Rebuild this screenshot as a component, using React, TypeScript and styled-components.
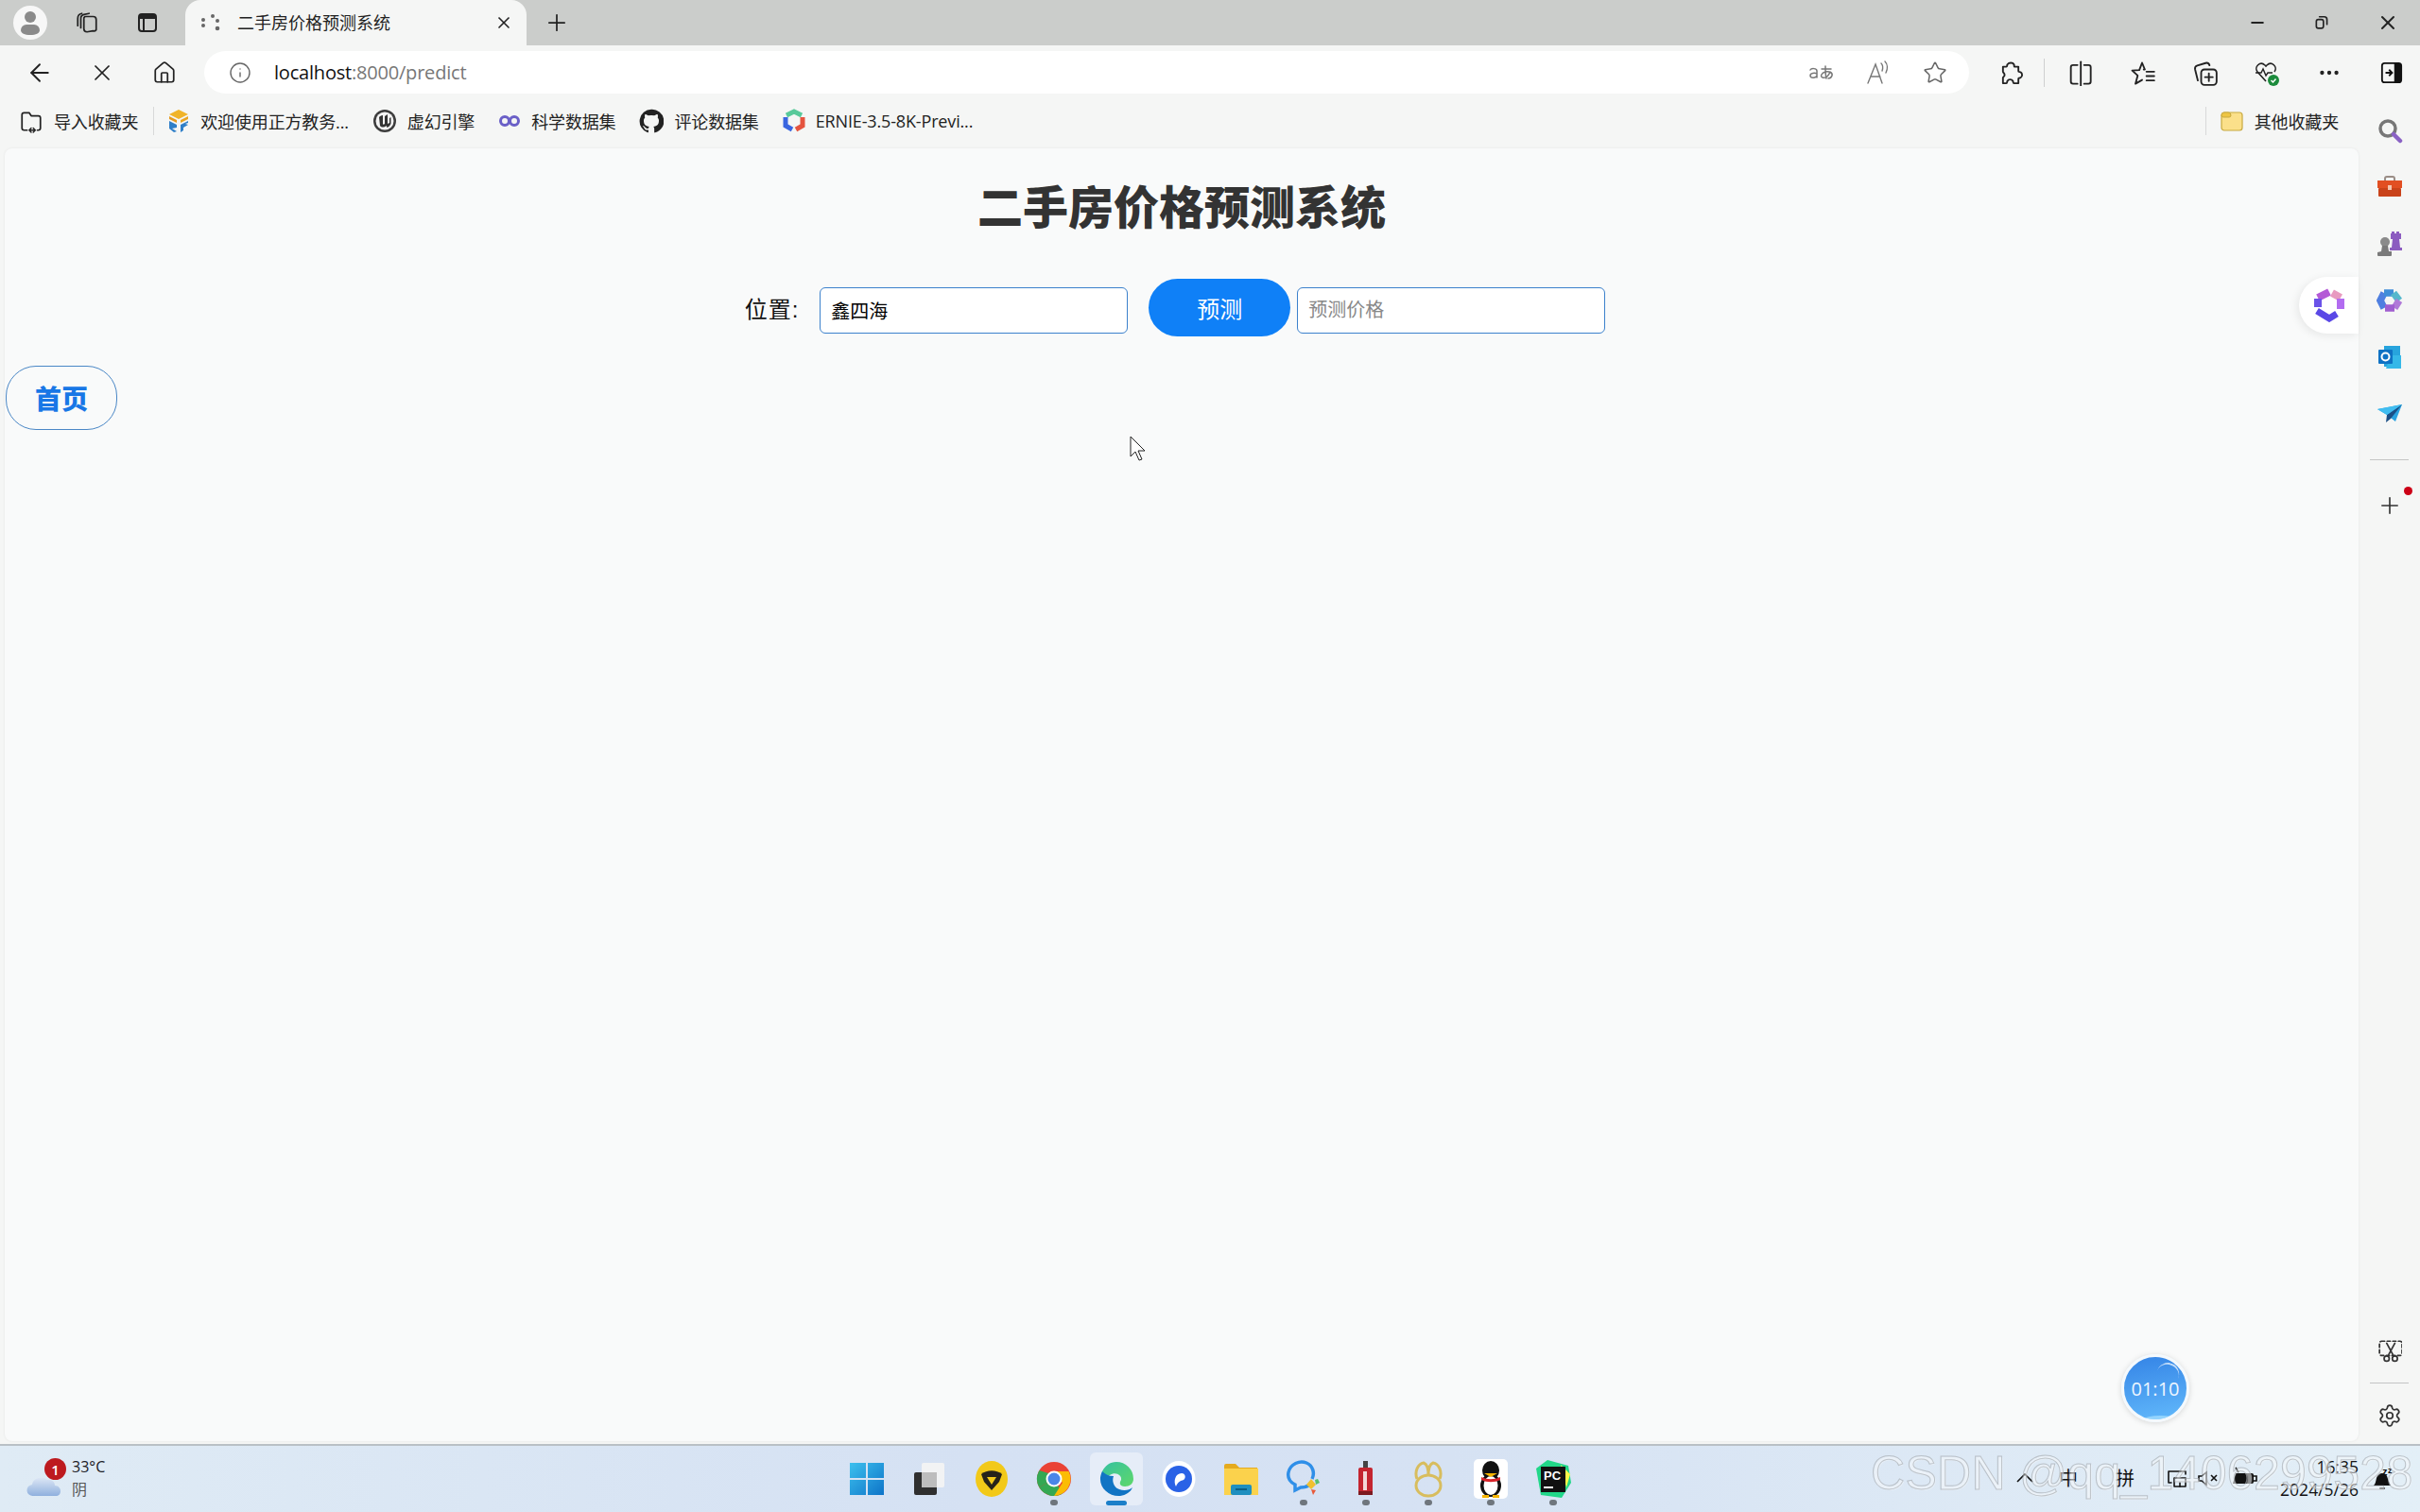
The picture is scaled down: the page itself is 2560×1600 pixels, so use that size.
import { FC, ReactNode } from 'react';
import styled, { createGlobalStyle } from 'styled-components';
import { ArrowLeft, Home, Info, Minus, MoreHorizontal, Plus, Settings, Star, X } from 'lucide-react';

const UI_FONT = '"Open Sans", "Noto Sans CJK SC", sans-serif';
const CJK_FONT = '"Liberation Sans", "Noto Sans CJK SC", sans-serif';

const GlobalStyle = createGlobalStyle`
  html, body {
    margin: 0;
    padding: 0;
    background: #f5f6f5;
    font-family: ${UI_FONT};
  }
  * {
    box-sizing: border-box;
  }
`;

const Screen = styled.div`
  position: relative;
  display: flex;
  flex-direction: column;
  width: 2560px;
  height: 1600px;
  overflow: hidden;
  background: #f5f6f5;
`;

/* ---- window chrome ---- */

const TitleBar = styled.div`
  display: flex;
  align-items: center;
  flex: 0 0 48px;
  padding-left: 14px;
  background: #cbcdcb;
`;

const Avatar = styled.div`
  display: flex;
  align-items: center;
  justify-content: center;
  width: 36px;
  height: 36px;
  margin-right: 10px;
  border-radius: 50%;
  background: #f7f7f7;
`;

const Slot = styled.div<{ $w?: number }>`
  display: flex;
  align-items: center;
  justify-content: center;
  flex: 0 0 ${(p) => p.$w ?? 66}px;
  height: 100%;
  color: #222;
`;

const Tab = styled.div`
  display: flex;
  align-items: center;
  flex: 0 0 361px;
  height: 48px;
  margin-left: 8px;
  padding: 0 14px 0 14px;
  border-radius: 16px 16px 0 0;
  background: #f5f6f5;
`;

const TabTitle = styled.span`
  flex: 1;
  margin: 0 0 2px 17px;
  font-family: ${CJK_FONT};
  font-size: 18px;
  color: #222;
`;

const Spacer = styled.div`
  flex: 1;
`;

const Toolbar = styled.div`
  display: flex;
  align-items: center;
  flex: 0 0 51px;
  padding: 6px 0 0 9px;
  background: #f5f6f5;
`;

const AddressBar = styled.div`
  display: flex;
  align-items: center;
  flex: 0 0 1867px;
  height: 45px;
  margin: 0 11px 0 9px;
  padding: 0 6px 0 26px;
  border-radius: 23px;
  background: #fff;
`;

const AddressText = styled.div`
  flex: 1;
  margin-left: 24px;
  font-size: 20px;
  letter-spacing: -0.2px;
  color: #777;
  b {
    font-weight: 400;
    color: #111;
  }
`;

const ToolDivider = styled.div`
  flex: 0 0 1px;
  height: 30px;
  margin: 0 4px 0 2px;
  background: #cfd0d0;
`;

/* ---- page below the toolbar ---- */

const Body = styled.div`
  display: flex;
  flex: 1;
  min-height: 0;
`;

const MainColumn = styled.div`
  display: flex;
  flex-direction: column;
  flex: 0 0 2495px;
`;

const BookmarkBar = styled.div`
  display: flex;
  align-items: center;
  flex: 0 0 58px;
  padding: 0 21px 0 20px;
`;

const Bookmark = styled.div<{ $last?: boolean }>`
  display: flex;
  align-items: center;
  gap: 11px;
  margin-right: ${(p) => (p.$last ? 0 : 25)}px;
  font-family: ${UI_FONT};
  font-size: 18px;
  letter-spacing: -0.15px;
  color: #222;
  white-space: nowrap;
`;

const BookmarkDivider = styled.div`
  flex: 0 0 1px;
  height: 30px;
  margin: 0 14px 0 -9px;
  background: #d8d9d9;
`;

const Content = styled.div`
  flex: 1;
  margin: 0 0 3px 5px;
  border-radius: 8px;
  background: #f9fafa;
  box-shadow: 0 0 3px rgba(0, 0, 0, 0.07);
`;

const PageHeading = styled.h1`
  margin: 0;
  padding-top: 29px;
  font-family: ${CJK_FONT};
  font-size: 48px;
  font-weight: 900;
  line-height: 70px;
  text-align: center;
  color: #333;
`;

const PredictForm = styled.form`
  display: flex;
  align-items: center;
  justify-content: center;
  margin-top: 39px;
  padding-right: 14px;
`;

const FieldLabel = styled.label`
  margin-right: 22px;
  font-family: ${CJK_FONT};
  font-size: 24px;
  letter-spacing: 1px;
  color: #111;
`;

const TextField = styled.input`
  width: 326px;
  height: 49px;
  margin-top: 5px;
  padding: 0 11px;
  border: 1px solid #3c81cc;
  border-radius: 6px;
  outline: none;
  background: #fff;
  font-family: ${CJK_FONT};
  font-size: 20px;
  color: #000;
  &::placeholder {
    color: #888;
  }
`;

const PredictButton = styled.button`
  width: 150px;
  height: 61px;
  margin: 0 7px 0 22px;
  border: none;
  border-radius: 31px;
  background: #0f80f7;
  font-family: ${CJK_FONT};
  font-size: 24px;
  color: #fff;
`;

const HomeLink = styled.a`
  display: flex;
  align-items: center;
  justify-content: center;
  width: 118px;
  height: 68px;
  margin: 31px 0 0 1px;
  border: 1.5px solid #4a87c6;
  border-radius: 32px;
  font-family: ${CJK_FONT};
  font-size: 28px;
  font-weight: 900;
  color: #1877e6;
`;

const SideRail = styled.div`
  display: flex;
  flex-direction: column;
  align-items: center;
  flex: 1;
  padding-top: 9px;
`;

const RailSlot = styled.div`
  position: relative;
  display: flex;
  align-items: center;
  justify-content: center;
  flex: 0 0 60px;
  width: 100%;
  color: #333;
`;

const RailDivider = styled.div<{ $my?: number }>`
  flex: 0 0 1px;
  width: 41px;
  margin: ${(p) => p.$my ?? 0}px 0;
  background: #c4c5c5;
`;

const NotifyDot = styled.span`
  position: absolute;
  top: 10px;
  right: 8px;
  width: 9px;
  height: 9px;
  border-radius: 50%;
  background: #cc0016;
`;

/* ---- things lying over the page ---- */

const FloatingPill = styled.div`
  position: absolute;
  top: 293px;
  left: 2432px;
  display: flex;
  align-items: center;
  justify-content: center;
  width: 63px;
  height: 60px;
  border-radius: 30px 0 0 30px;
  background: #fff;
  box-shadow: -2px 2px 10px rgba(0, 0, 0, 0.08);
`;

const TimerBubble = styled.div`
  position: absolute;
  top: 1433px;
  left: 2244px;
  display: flex;
  align-items: center;
  justify-content: center;
  width: 72px;
  height: 72px;
  border: 3px solid #f4f9fd;
  border-radius: 50%;
  overflow: hidden;
  background: linear-gradient(170deg, #3484e6, #62b9fb);
  box-shadow: 0 1px 6px rgba(0, 0, 0, 0.15);
  font-family: 'Open Sans', sans-serif;
  font-size: 20px;
  color: #eef6ff;
  &::before {
    content: '';
    position: absolute;
    top: 6px;
    right: 8px;
    width: 24px;
    height: 24px;
    border-top: 2px solid rgba(255, 255, 255, 0.7);
    border-radius: 50%;
    transform: rotate(20deg);
  }
  &::after {
    content: '';
    position: absolute;
    bottom: -30px;
    left: 6px;
    width: 64px;
    height: 34px;
    border-radius: 50%;
    background: rgba(170, 225, 255, 0.7);
  }
`;

const Pointer = styled.svg`
  position: absolute;
  top: 461px;
  left: 1195px;
`;

const Watermark = styled.div`
  position: absolute;
  top: 1530px;
  left: 1979px;
  font-family: 'Liberation Sans', sans-serif;
  font-size: 50px;
  line-height: 58px;
  letter-spacing: 0.3px;
  white-space: nowrap;
  color: rgba(238, 243, 247, 0.25);
  -webkit-text-stroke: 1px rgba(160, 165, 170, 0.6);
  text-shadow: 1px 1px 1px rgba(255, 255, 255, 0.4);
`;

/* ---- taskbar ---- */

const Taskbar = styled.div`
  display: grid;
  grid-template-columns: 1fr auto 1fr;
  align-items: center;
  flex: 0 0 72px;
  border-top: 2px solid #b9c0c5;
  background: linear-gradient(90deg, #dfebf5 0%, #d5e1f3 40%, #d6e2f3 60%, #e3eff7 100%);
`;

const Weather = styled.div`
  display: flex;
  align-items: center;
  padding-left: 28px;
`;

const CloudBox = styled.div`
  position: relative;
  display: flex;
  align-items: flex-end;
  width: 38px;
  height: 40px;
`;

const WeatherBadge = styled.span`
  position: absolute;
  top: -2px;
  left: 19px;
  display: flex;
  align-items: center;
  justify-content: center;
  width: 23px;
  height: 23px;
  border-radius: 50%;
  background: #bd1a1f;
  font-family: 'Open Sans', sans-serif;
  font-size: 15px;
  font-weight: 600;
  color: #fff;
`;

const WeatherText = styled.div`
  margin: -2px 0 0 10px;
  font-family: ${UI_FONT};
  font-size: 16px;
  line-height: 24px;
  color: #1c2026;
  span {
    display: block;
    color: #555;
  }
`;

const TaskIcons = styled.div`
  display: flex;
  align-items: center;
`;

const TaskItem = styled.div<{ $active?: boolean }>`
  position: relative;
  display: flex;
  align-items: center;
  justify-content: center;
  width: ${(p) => (p.$active ? 56 : 66)}px;
  height: 56px;
  margin: 0 ${(p) => (p.$active ? 5 : 0)}px;
  border-radius: 6px;
  background: ${(p) => (p.$active ? '#e6edf8' : 'transparent')};
`;

const RunDot = styled.span<{ $active?: boolean }>`
  position: absolute;
  bottom: 0;
  left: 50%;
  width: ${(p) => (p.$active ? 22 : 8)}px;
  height: ${(p) => (p.$active ? 5 : 6)}px;
  border-radius: 3px;
  background: ${(p) => (p.$active ? '#1b7fc9' : '#6f767d')};
  transform: translateX(-50%);
`;

const Tray = styled.div`
  display: flex;
  align-items: center;
  justify-content: flex-end;
  padding-right: 26px;
  color: #111;
`;

const TrayGlyph = styled.span<{ $w: number }>`
  display: flex;
  align-items: center;
  justify-content: center;
  flex: 0 0 ${(p) => p.$w}px;
  margin-top: -3px;
  font-family: ${CJK_FONT};
  font-size: 20px;
`;

const Clock = styled.div`
  margin: -2px 11px 0 17px;
  font-family: 'Open Sans', sans-serif;
  font-size: 17.5px;
  line-height: 24px;
  text-align: right;
`;

/* ---- drawn icons ---- */

const Svg: FC<{ size?: number; children: ReactNode; stroke?: string }> = ({ size = 24, children, stroke = 'currentColor' }) => (
  <svg width={size} height={size} viewBox="0 0 24 24" fill="none" stroke={stroke} strokeWidth={1.6} strokeLinecap="round" strokeLinejoin="round">
    {children}
  </svg>
);

const PersonIcon = () => (
  <svg width="24" height="28" viewBox="0 0 24 28">
    <circle cx="12" cy="8" r="6" fill="#8a8a8a" />
    <path d="M2 22a6 6 0 0 1 6-6h8a6 6 0 0 1 6 6c0 3-4 5-10 5S2 25 2 22z" fill="#8a8a8a" />
  </svg>
);

const WorkspaceIcon = () => (
  <Svg size={26}>
    <path d="M10 6h8a3 3 0 0 1 3 3v10a3 3 0 0 1-3 1l-6 1a3 3 0 0 1-3-3V9a3 3 0 0 1 1-3z" />
    <path d="M6 17V8a4 4 0 0 1 3-4l5-1" />
    <path d="M3 15V8a5 5 0 0 1 4-5" />
  </Svg>
);

const TabStripIcon = () => (
  <svg width="24" height="24" viewBox="0 0 24 24" fill="none">
    <rect x="3" y="3" width="18" height="18" rx="3" stroke="#222" strokeWidth="2" />
    <path d="M3 7a4 4 0 0 1 4-4h10a4 4 0 0 1 4 4v1H3z" fill="#222" />
    <path d="M8 8v13" stroke="#222" strokeWidth="2" />
  </svg>
);

const SpinnerIcon = () => (
  <svg width="24" height="24" viewBox="0 0 24 24" fill="#666">
    <circle cx="15" cy="5" r="2" />
    <circle cx="20" cy="10" r="2" />
    <circle cx="20" cy="18" r="2.3" />
    <circle cx="5" cy="9" r="2" />
    <circle cx="5" cy="15" r="2" />
  </svg>
);

const RestoreIcon = () => (
  <Svg size={20}>
    <rect x="4" y="8" width="9" height="11" rx="2.5" strokeWidth="2" />
    <path d="M8 4.5h6a3.5 3.5 0 0 1 3.5 3.5v6" strokeWidth="2" />
  </Svg>
);

const TranslateIcon = () => (
  <svg width="30" height="24" viewBox="0 0 30 24" fill="none" stroke="#777" strokeWidth="1.5" strokeLinecap="round">
    <path d="M3 9c1-2 7-2 7 1v7M10 13c-2-1-7-1-7 2s6 3 7 0" />
    <path d="M15 8h10M19 5c0 6 0 10 1 13M24 11c-2 5-5 7-8 6s-1-5 3-6 8 1 7 4-3 3-4 3" />
  </svg>
);

const ReadAloudIcon = () => (
  <svg width="28" height="28" viewBox="0 0 28 28" fill="none" stroke="#777" strokeWidth="1.4" strokeLinecap="round">
    <path d="M3 25 11 5l7 20M6 18h10" />
    <path d="M17 4c2 2 2 5 1 8M21 2c3 3 3 8 1 12" />
  </svg>
);

const PuzzleIcon = () => (
  <Svg size={28}>
    <path d="M9 4.5c1.500-2 5-2 6 0 .4.800-.4 2 1 2h3v4c0 1 1.200.6 2 1 1.800 1 1.800 4 0 5-.8.4-2 0-2 1v4h-4c-1 0-.6-1.200-1-2-1-1.800-4-1.800-5 0-.4.800 0 2-1 2H5v-5c0-1.200 1.500-.6 1.500-2.500S5 12 5 11V6.500h3c1 0 .6-1.200 1-2z" />
  </Svg>
);

const SplitIcon = () => (
  <Svg size={28}>
    <path d="M10 5H6a2 2 0 0 0-2 2v13a2 2 0 0 0 2 2h4M16 5h4a2 2 0 0 1 2 2v13a2 2 0 0 1-2 2h-4" />
    <path d="M13 2v23" />
  </Svg>
);

const FavoritesIcon = () => (
  <Svg size={28}>
    <path d="M12 3l2.500 6h-1M12 3 9.500 9.500 3 10l5 4.500L6 22l6-3.500" />
    <path d="M16 11h7M16 15h7M16 19h7" />
  </Svg>
);

const CollectionsIcon = () => (
  <Svg size={28}>
    <rect x="9" y="9" width="14" height="14" rx="3" />
    <path d="M16 12.500v7M12.500 16h7" />
    <path d="M6 19 3.500 9a3 3 0 0 1 2-3.500L13 3.200c1.500-.4 3 .3 3.600 2" />
  </Svg>
);

const HealthIcon = () => (
  <svg width="30" height="30" viewBox="0 0 30 30" fill="none">
    <path d="M14 24 5 14c-4-5 3-12 8-7l1 1 1-1c5-5 12 2 8 7" stroke="#222" strokeWidth="1.6" />
    <path d="M3 15h6l2-4 3 7 2-3h5" stroke="#222" strokeWidth="1.4" />
    <circle cx="22" cy="23" r="6" fill="#1c8b3c" />
    <path d="m19.500 23 2 2 3-3.500" stroke="#fff" strokeWidth="1.500" />
  </svg>
);

const PanelToggleIcon = () => (
  <svg width="24" height="24" viewBox="0 0 26 26" fill="none">
    <rect x="2" y="2" width="22" height="22" rx="3" stroke="#111" strokeWidth="2" />
    <path d="M16 2h5a3 3 0 0 1 3 3v16a3 3 0 0 1-3 3h-5z" fill="#111" />
    <path d="M6 13h7M10 9.500l3.500 3.500-3.500 3.500" stroke="#111" strokeWidth="2" />
  </svg>
);

const ImportFolderIcon = () => (
  <Svg size={26}>
    <path d="M8 21H5a2 2 0 0 1-2-2V6a2 2 0 0 1 2-2h5l2 3h7a2 2 0 0 1 2 2v10a2 2 0 0 1-2 2h-1" />
    <path d="M10 21h6M12 19l-2 2 2 2M14 19l2 2-2 2" strokeWidth="1.3" />
  </Svg>
);

const CampusIcon = () => (
  <svg width="24" height="28" viewBox="0 0 24 28">
    <path d="M12 2 22 7 12 12 2 7z" fill="#f0b429" />
    <path d="M2 9l8 4v3l-8-4z" fill="#e59a1e" />
    <path d="M22 9l-8 4v3l8-4z" fill="#e8a420" />
    <path d="M2 14l8 4v3l-5 1 5 3-3 1-5-4zM22 14l-8 4v8l3-2v-3l5-3-3-1 3-1z" fill="#2f7fc8" />
  </svg>
);

const UnrealIcon = () => (
  <svg width="26" height="26" viewBox="0 0 26 26">
    <circle cx="13" cy="13" r="12" fill="#3d3d3d" />
    <circle cx="13" cy="13" r="9.500" fill="#f4f4f4" />
    <path d="M7 9c1-1 2-2 4-2v9c0 1 1 1 2 0V8l3-2v10l2-1v-5l1.500-1v7c-1 2-2 3-4 4l-1-2c-2 2-5 2-6.500 0z" fill="#333" />
  </svg>
);

const InfinityIcon = () => (
  <svg width="24" height="24" viewBox="0 0 24 24" fill="none" stroke="#6a5fc7" strokeWidth="3">
    <circle cx="7" cy="12" r="4.500" />
    <circle cx="17" cy="12" r="4.500" />
  </svg>
);

const GithubIcon = () => (
  <svg width="26" height="26" viewBox="0 0 24 24" fill="#222">
    <path d="M12 .8a11.500 11.500 0 0 0-3.600 22.400c.6.100.8-.2.8-.5v-2c-3.200.7-3.900-1.400-3.900-1.400-.5-1.300-1.300-1.700-1.300-1.700-1-.7.100-.7.100-.7 1.200.1 1.800 1.200 1.800 1.200 1 1.800 2.700 1.300 3.300 1 .1-.8.400-1.300.7-1.600-2.600-.3-5.300-1.300-5.300-5.700 0-1.300.4-2.300 1.200-3.100-.1-.3-.5-1.500.1-3.100 0 0 1-.3 3.200 1.200a11 11 0 0 1 5.800 0c2.200-1.500 3.200-1.200 3.200-1.200.6 1.600.2 2.800.1 3.100.7.800 1.200 1.800 1.200 3.100 0 4.400-2.700 5.400-5.300 5.700.4.400.8 1.100.8 2.200v3.200c0 .3.200.7.800.5A11.500 11.500 0 0 0 12 .8z" />
  </svg>
);

const ErnieIcon = () => (
  <svg width="24" height="28" viewBox="0 0 24 28" fill="none" strokeWidth="5">
    <path d="M4 8 12 4l8 4" stroke="#58c99a" />
    <path d="M3 10v9l7 4" stroke="#3a66e0" />
    <path d="M21 10v9l-7 4" stroke="#e5543f" />
  </svg>
);

const FolderIcon = () => (
  <svg width="26" height="26" viewBox="0 0 26 26">
    <rect x="2" y="4" width="22" height="19" rx="3" fill="#fbe08a" stroke="#c8a93f" strokeWidth="1.200" />
    <path d="M2 7a3 3 0 0 1 3-3h4a3 3 0 0 1 3 3 2 2 0 0 1-2 2H4a2 2 0 0 1-2-2z" fill="#eec544" stroke="#c8a93f" />
  </svg>
);

const SearchRailIcon = () => (
  <svg width="28" height="28" viewBox="0 0 28 28" fill="none">
    <circle cx="12" cy="12" r="8" stroke="#777" strokeWidth="3.500" />
    <path d="m18 18 7 7" stroke="#8a62c4" strokeWidth="4.500" strokeLinecap="round" />
  </svg>
);

const ToolboxIcon = () => (
  <svg width="28" height="24" viewBox="0 0 28 24">
    <path d="M9 6V3a2 2 0 0 1 2-2h6a2 2 0 0 1 2 2v3" fill="none" stroke="#9a8d86" strokeWidth="2" />
    <rect x="1" y="5" width="26" height="8" fill="#e24f22" />
    <rect x="2" y="13" width="24" height="9" rx="1" fill="#c9431a" />
    <rect x="12" y="10" width="4" height="5" fill="#f3c5ae" />
  </svg>
);

const ChessIcon = () => (
  <svg width="30" height="30" viewBox="0 0 30 30">
    <circle cx="10" cy="13" r="5" fill="#8a8a8a" />
    <path d="M7 17h6l1 6h3v4a1 1 0 0 1-1 1H3a1 1 0 0 1-1-1v-3l4-1z" fill="#7a7a7a" />
    <path d="M17 2h3v2h2V2h3v2h2v6h-2l1 9h2v3H15v-3h2l1-9h-2V4h1z" fill="#8c5cc0" />
  </svg>
);

const CopilotIcon = () => (
  <svg width="28" height="28" viewBox="0 0 28 28" fill="none" strokeWidth="7.500">
    <path d="M8 6 4 14l4 8" stroke="#4f7fe0" />
    <path d="M8 6h10" stroke="#3f8ed8" />
    <path d="m18 6 6 8" stroke="#55b7cc" />
    <path d="m24 14-5 8" stroke="#b07ad8" />
    <path d="M19 22H9" stroke="#a05fd0" />
  </svg>
);

const OutlookIcon = () => (
  <svg width="26" height="26" viewBox="0 0 26 26">
    <path d="M7 1h17v22H7z" fill="#27a4dd" />
    <path d="M14 11h11v14H9z" fill="#35b8e8" />
    <rect x="1" y="5" width="15" height="15" rx="1" fill="#0f72c4" />
    <circle cx="8.500" cy="12.500" r="4" fill="none" stroke="#fff" strokeWidth="2" />
  </svg>
);

const SendIcon = () => (
  <svg width="28" height="22" viewBox="0 0 28 22">
    <path d="M1 6 27 1 20 19 11 12z" fill="#2aa3e0" />
    <path d="M27 1 11 12l-1 8 5-4z" fill="#1a4f86" />
    <path d="M1 6l10 6 16-11z" fill="#40bdf0" />
  </svg>
);

const CaptureIcon = () => (
  <Svg size={26}>
    <rect x="2" y="3" width="22" height="14" rx="2" strokeDasharray="3 2.500" />
    <path d="m9 5 6 11M17 5l-6 11" />
    <circle cx="9" cy="20" r="2.500" />
    <circle cx="17" cy="20" r="2.500" />
  </Svg>
);

const HexLogo = () => (
  <svg width="34" height="36" viewBox="0 0 34 36" fill="none">
    <path d="M5 10 17 4" stroke="#b45ad6" strokeWidth="8" />
    <path d="M20 5l9 5" stroke="#e89ac0" strokeWidth="8" />
    <path d="M29 11v11" stroke="#b26cf0" strokeWidth="8" />
    <path d="M5 11v9" stroke="#6a52e8" strokeWidth="8" />
    <path d="M4 24l13 8 8-5" stroke="#5a48e6" strokeWidth="7" />
  </svg>
);

const CloudIcon = () => (
  <svg width="38" height="30" viewBox="0 0 38 30">
    <defs>
      <linearGradient id="cloud" x1="0" y1="0" x2="0" y2="1">
        <stop offset="0" stopColor="#dde7f5" />
        <stop offset="1" stopColor="#8fb0de" />
      </linearGradient>
    </defs>
    <path d="M7 28a6 6 0 0 1-1-12c1-7 11-10 16-5 3-1 8 1 8 6 4 0 6 3 6 6s-2 5-5 5z" fill="url(#cloud)" />
  </svg>
);

const WindowsLogo = () => (
  <svg width="36" height="36" viewBox="0 0 36 36">
    <defs>
      <linearGradient id="win" x1="0" y1="0" x2="1" y2="1">
        <stop offset="0" stopColor="#3cc0ee" />
        <stop offset="1" stopColor="#0e74c8" />
      </linearGradient>
    </defs>
    <path d="M0 1h17v16H0zM19 1h17v16H19zM0 19h17v16H0zM19 19h17v16H19z" fill="url(#win)" />
  </svg>
);

const TaskViewIcon = () => (
  <svg width="36" height="36" viewBox="0 0 36 36">
    <rect x="10" y="1" width="24" height="26" rx="2" fill="#f2f3f4" />
    <rect x="2" y="11" width="24" height="24" rx="2" fill="#2f2f2f" />
    <rect x="10" y="11" width="16" height="16" fill="#bdbdbd" />
  </svg>
);

const ShieldAppIcon = () => (
  <svg width="36" height="38" viewBox="0 0 36 38">
    <ellipse cx="18" cy="19" rx="17" ry="19" fill="#f2c919" />
    <path d="M7 14c6-5 16-5 22 0l-3 8-8 9-8-9z" fill="#26221a" />
    <path d="M13 17h10l-5 8z" fill="#f2c919" />
  </svg>
);

const ChromeIcon = () => (
  <svg width="38" height="38" viewBox="0 0 38 38">
    <circle cx="19" cy="19" r="18" fill="#ea4335" />
    <path d="M19 19 3.400 28A18 18 0 0 1 3.400 10L13 13z" fill="#34a853" />
    <path d="M19 19 3.400 28A18 18 0 0 0 28 34.600z" fill="#34a853" />
    <path d="M19 11h15.600A18 18 0 0 1 19 37l9-14z" fill="#fbbc04" />
    <circle cx="19" cy="19" r="8.500" fill="#fff" />
    <circle cx="19" cy="19" r="6.500" fill="#4a86e8" />
  </svg>
);

const EdgeIcon = () => (
  <svg width="38" height="38" viewBox="0 0 38 38">
    <defs>
      <linearGradient id="edge" x1="0" y1="0" x2="1" y2="1">
        <stop offset="0" stopColor="#35c1a0" />
        <stop offset="1" stopColor="#5fd86a" />
      </linearGradient>
    </defs>
    <path d="M19 1a18 18 0 0 1 18 18c0 5-4 8-9 8-6 0-6-4-4-7 1-5-6-9-12-5C7 18 3 13 4 11 7 5 12 1 19 1z" fill="url(#edge)" />
    <path d="M4 11c-7 14 5 27 19 26 6-1 11-4 13-9-3 3-9 4-14 2-6-2-8-9-6-14-5 0-9-2-12-5z" fill="#1174c4" />
  </svg>
);

const CircleAppIcon = () => (
  <svg width="36" height="38" viewBox="0 0 36 38">
    <ellipse cx="18" cy="19" rx="17.500" ry="19" fill="#fff" />
    <circle cx="18" cy="19" r="14" fill="#2a62e6" />
    <path d="M15 27c-3-5-1-14 6-14 4 0 5 5 2 7-3 1-6 2-8 7z" fill="#fff" />
  </svg>
);

const ExplorerIcon = () => (
  <svg width="38" height="38" viewBox="0 0 38 38">
    <path d="M1 5a2 2 0 0 1 2-2h10l4 4h19v4H1z" fill="#e5aa1e" />
    <rect x="1" y="8" width="36" height="28" fill="#fbd24c" />
    <rect x="8" y="25" width="22" height="11" rx="2" fill="#1f8fbf" />
    <rect x="13" y="29" width="12" height="2" fill="#0b5f86" />
  </svg>
);

const ChatAppIcon = () => (
  <svg width="38" height="40" viewBox="0 0 38 40" fill="none">
    <path d="M26 26c-3 2-6 3-10 3l-6 3v-6C4 23 2 18 3 13 5 4 15 0 22 3s9 11 6 17" stroke="#2f8fe8" strokeWidth="3.500" />
    <path d="M27 20l-5 6 5 5 5-5z" fill="#f0c030" />
    <path d="m27 31 2 6 3-5z" fill="#e85a3a" />
    <path d="m32 26 4-2-2-4-3 1z" fill="#56c070" />
  </svg>
);

const BottleIcon = () => (
  <svg width="18" height="40" viewBox="0 0 18 40">
    <rect x="6" y="1" width="5" height="7" fill="#444" />
    <rect x="1" y="8" width="15" height="28" rx="2" fill="#c42530" />
    <rect x="6" y="12" width="4" height="20" fill="#f3d8d8" />
    <rect x="1" y="33" width="15" height="4" fill="#7d1a20" />
  </svg>
);

const PawIcon = () => (
  <svg width="36" height="40" viewBox="0 0 36 40" fill="none" stroke="#d8bd5e" strokeWidth="3">
    <ellipse cx="18" cy="27" rx="13" ry="11" />
    <path d="M6 20C3 12 7 4 13 3c3 1 5 5 5 13M30 20c3-8-1-16-7-17-3 1-5 5-5 13" />
  </svg>
);

const PenguinIcon = () => (
  <svg width="36" height="42" viewBox="0 0 36 42">
    <rect x="0" y="0" width="36" height="42" rx="5" fill="#fff" />
    <ellipse cx="18" cy="12" rx="9" ry="10" fill="#111" />
    <ellipse cx="18" cy="28" rx="11" ry="12" fill="#111" />
    <ellipse cx="18" cy="28" rx="7.500" ry="10" fill="#fff" />
    <path d="M11 15h14l-7 4z" fill="#f5b400" />
    <path d="M8 19c6 3 14 3 20 0v3c-6 3-14 3-20 0z" fill="#d8232a" />
    <path d="M9 38h7v3H9zM20 38h7v3h-7z" fill="#f5b400" />
  </svg>
);

const PyCharmIcon = () => (
  <svg width="40" height="42" viewBox="0 0 40 42" fill="none">
    <path d="M2 10 14 1l22 6 3 18-10 16-22-3z" fill="#21d789" />
    <path d="M28 6l10 10-4 14z" fill="#fcf84a" />
    <rect x="7" y="8" width="26" height="27" fill="#111" />
    <text x="10" y="22" fontFamily="Liberation Sans, sans-serif" fontSize="13" fontWeight="700" fill="#fff">PC</text>
    <rect x="10" y="29" width="10" height="2" fill="#fff" />
  </svg>
);

const TrayMonitor = () => (
  <Svg size={24}>
    <path d="M6 17H3V5h18v3M9 21h12v-9H9z" />
    <path d="M15 17v4" />
  </Svg>
);

const TraySpeaker = () => (
  <svg width="26" height="24" viewBox="0 0 26 24" fill="none" stroke="#111" strokeWidth="1.600">
    <path d="M11 6 6 10H3v5h3l5 4z" />
    <path d="m16 9 6 6M22 9l-6 6" />
  </svg>
);

const TrayBattery = () => (
  <svg width="30" height="26" viewBox="0 0 30 26">
    <path d="M6 8h17a2 2 0 0 1 2 2v7a2 2 0 0 1-2 2H3z" fill="#111" />
    <path d="M6 2 9 7M25 11h3v5h-3" fill="none" stroke="#111" strokeWidth="1.600" />
  </svg>
);

const TrayBell = () => (
  <svg width="28" height="28" viewBox="0 0 28 28" fill="#111">
    <path d="M5 21c2-2 2-4 3-8 .6-3 3-5 6-5s4 1 5 3l2 6 2 4z" />
    <rect x="11" y="23" width="6" height="2" rx="1" />
    <text x="14" y="10" fontFamily="Liberation Sans, sans-serif" fontSize="11" fontWeight="700">z</text>
    <text x="20" y="8" fontFamily="Liberation Sans, sans-serif" fontSize="9" fontWeight="700">z</text>
  </svg>
);

const bookmarks: { label: string; icon: ReactNode }[] = [
  { label: '欢迎使用正方教务...', icon: <CampusIcon /> },
  { label: '虚幻引擎', icon: <UnrealIcon /> },
  { label: '科学数据集', icon: <InfinityIcon /> },
  { label: '评论数据集', icon: <GithubIcon /> },
  { label: 'ERNIE-3.5-8K-Previ...', icon: <ErnieIcon /> },
];

const railIcons = [<SearchRailIcon />, <ToolboxIcon />, <ChessIcon />, <CopilotIcon />, <OutlookIcon />, <SendIcon />];

const taskApps: { icon: ReactNode; running?: boolean; active?: boolean }[] = [
  { icon: <WindowsLogo /> },
  { icon: <TaskViewIcon /> },
  { icon: <ShieldAppIcon /> },
  { icon: <ChromeIcon />, running: true },
  { icon: <EdgeIcon />, running: true, active: true },
  { icon: <CircleAppIcon /> },
  { icon: <ExplorerIcon /> },
  { icon: <ChatAppIcon />, running: true },
  { icon: <BottleIcon />, running: true },
  { icon: <PawIcon />, running: true },
  { icon: <PenguinIcon />, running: true },
  { icon: <PyCharmIcon />, running: true },
];

const App: FC = () => (
  <Screen>
    <GlobalStyle />
    <TitleBar>
      <Avatar>
        <PersonIcon />
      </Avatar>
      <Slot $w={64}>
        <WorkspaceIcon />
      </Slot>
      <Slot $w={64}>
        <TabStripIcon />
      </Slot>
      <Tab>
        <SpinnerIcon />
        <TabTitle>二手房价格预测系统</TabTitle>
        <X size={20} strokeWidth={2} color="#222" />
      </Tab>
      <Slot $w={64}>
        <Plus size={28} strokeWidth={1.5} />
      </Slot>
      <Spacer />
      <Slot $w={69}>
        <Minus size={20} strokeWidth={2.4} />
      </Slot>
      <Slot $w={69}>
        <RestoreIcon />
      </Slot>
      <Slot $w={69}>
        <X size={24} strokeWidth={2} />
      </Slot>
    </TitleBar>

    <Toolbar>
      <Slot>
        <ArrowLeft size={30} strokeWidth={1.5} />
      </Slot>
      <Slot>
        <X size={28} strokeWidth={1.5} />
      </Slot>
      <Slot>
        <Home size={26} strokeWidth={1.6} />
      </Slot>
      <AddressBar>
        <Info size={24} strokeWidth={1.4} color="#666" />
        <AddressText>
          <b>localhost</b>:8000/predict
        </AddressText>
        <Slot $w={60}>
          <TranslateIcon />
        </Slot>
        <Slot $w={60}>
          <ReadAloudIcon />
        </Slot>
        <Slot $w={60}>
          <Star size={26} strokeWidth={1.4} color="#666" />
        </Slot>
      </AddressBar>
      <Slot>
        <PuzzleIcon />
      </Slot>
      <ToolDivider />
      <Slot>
        <SplitIcon />
      </Slot>
      <Slot>
        <FavoritesIcon />
      </Slot>
      <Slot>
        <CollectionsIcon />
      </Slot>
      <Slot>
        <HealthIcon />
      </Slot>
      <Slot>
        <MoreHorizontal size={26} strokeWidth={2} />
      </Slot>
      <Slot>
        <PanelToggleIcon />
      </Slot>
    </Toolbar>

    <Body>
      <MainColumn>
        <BookmarkBar>
          <Bookmark>
            <ImportFolderIcon />
            导入收藏夹
          </Bookmark>
          <BookmarkDivider />
          {bookmarks.map((item) => (
            <Bookmark key={item.label}>
              {item.icon}
              {item.label}
            </Bookmark>
          ))}
          <Spacer />
          <BookmarkDivider />
          <Bookmark $last>
            <FolderIcon />
            其他收藏夹
          </Bookmark>
        </BookmarkBar>
        <Content>
          <PageHeading>二手房价格预测系统</PageHeading>
          <PredictForm>
            <FieldLabel>位置:</FieldLabel>
            <TextField defaultValue="鑫四海" />
            <PredictButton type="button">预测</PredictButton>
            <TextField placeholder="预测价格" readOnly />
          </PredictForm>
          <HomeLink>首页</HomeLink>
        </Content>
      </MainColumn>
      <SideRail>
        {railIcons.map((icon, i) => (
          <RailSlot key={i}>{icon}</RailSlot>
        ))}
        <RailDivider $my={18} />
        <RailSlot>
          <NotifyDot />
          <Plus size={28} strokeWidth={1.4} />
        </RailSlot>
        <Spacer />
        <RailSlot>
          <CaptureIcon />
        </RailSlot>
        <RailDivider $my={4} />
        <RailSlot>
          <Settings size={26} strokeWidth={1.6} />
        </RailSlot>
      </SideRail>
    </Body>

    <Taskbar>
      <Weather>
        <CloudBox>
          <CloudIcon />
          <WeatherBadge>1</WeatherBadge>
        </CloudBox>
        <WeatherText>
          33°C
          <span>阴</span>
        </WeatherText>
      </Weather>
      <TaskIcons>
        {taskApps.map((app, i) => (
          <TaskItem key={i} $active={app.active}>
            {app.icon}
            {app.running && <RunDot $active={app.active} />}
          </TaskItem>
        ))}
      </TaskIcons>
      <Tray>
        <TrayGlyph $w={50}>
          <svg width="22" height="14" viewBox="0 0 22 14" fill="none" stroke="#111" strokeWidth="1.6">
            <path d="m3 11 8-8 8 8" />
          </svg>
        </TrayGlyph>
        <TrayGlyph $w={42}>中</TrayGlyph>
        <TrayGlyph $w={78}>拼</TrayGlyph>
        <TrayGlyph $w={32}>
          <TrayMonitor />
        </TrayGlyph>
        <TrayGlyph $w={34}>
          <TraySpeaker />
        </TrayGlyph>
        <TrayGlyph $w={42}>
          <TrayBattery />
        </TrayGlyph>
        <Clock>
          16:35
          <br />
          2024/5/26
        </Clock>
        <TrayBell />
      </Tray>
    </Taskbar>

    <FloatingPill>
      <HexLogo />
    </FloatingPill>
    <TimerBubble>01:10</TimerBubble>
    <Pointer width="20" height="28" viewBox="0 0 20 28">
      <path d="M1 1v21l5-5 4 9 3-1-4-9h7z" fill="#fff" stroke="#222" strokeWidth="1" />
    </Pointer>
    <Watermark>CSDN @qq_1406299528</Watermark>
  </Screen>
);

export default App;
